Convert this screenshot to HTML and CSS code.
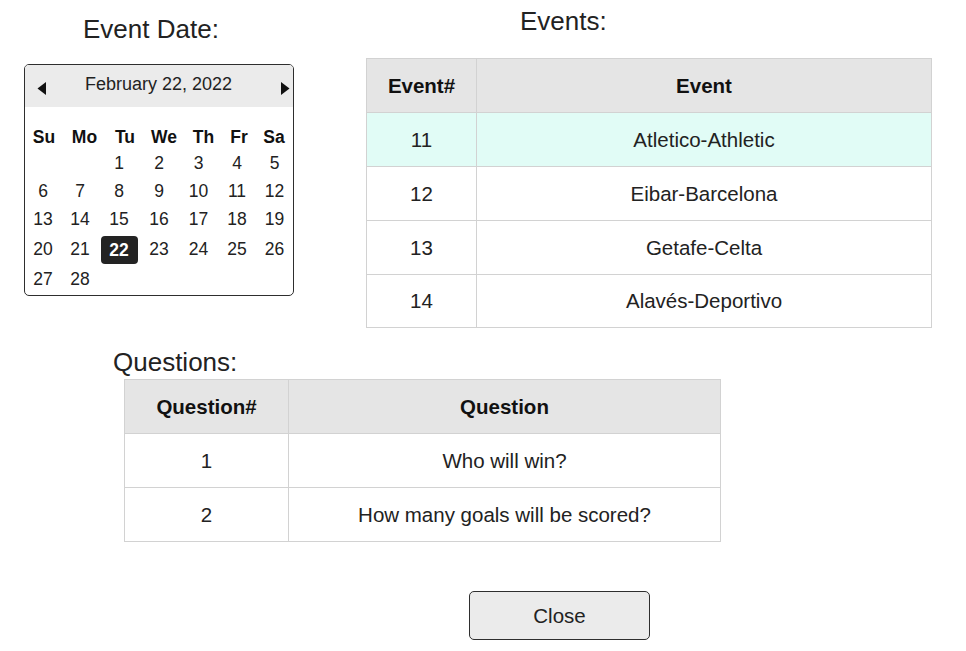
FILE: index.html
```html
<!DOCTYPE html>
<html lang="en">
<head>
<meta charset="utf-8">
<title>Event Questions</title>
<link rel="stylesheet" href="styles.css">
</head>
<body>
<div class="top">
  <section class="date-panel">
    <h2 class="panel-title date-title">Event Date:</h2>
    <div class="calendar">
      <div class="cal-header">
        <button class="nav-btn" aria-label="Previous month">
          <svg width="10" height="13" viewBox="0 0 10 13"><polygon points="9,0 9,13 0.5,6.5" fill="#111"/></svg>
        </button>
        <span class="cal-month">February 22, 2022</span>
        <button class="nav-btn" aria-label="Next month">
          <svg width="10" height="13" viewBox="0 0 10 13"><polygon points="1,0 1,13 9.5,6.5" fill="#111"/></svg>
        </button>
      </div>
      <div class="cal-body">
        <div class="cal-names">
          <span>Su</span><span>Mo</span><span>Tu</span><span>We</span><span>Th</span><span>Fr</span><span>Sa</span>
        </div>
        <div class="cal-days">
          <span></span><span></span><span>1</span><span>2</span><span>3</span><span>4</span><span>5</span>
          <span>6</span><span>7</span><span>8</span><span>9</span><span>10</span><span>11</span><span>12</span>
          <span>13</span><span>14</span><span>15</span><span>16</span><span>17</span><span>18</span><span>19</span>
          <span>20</span><span>21</span><span><b class="selected">22</b></span><span>23</span><span>24</span><span>25</span><span>26</span>
          <span>27</span><span>28</span><span></span><span></span><span></span><span></span><span></span>
        </div>
      </div>
    </div>
  </section>
  <section class="events-panel">
    <h2 class="panel-title events-title">Events:</h2>
    <table class="grid-table events-table">
      <thead>
        <tr><th class="col-num">Event#</th><th>Event</th></tr>
      </thead>
      <tbody>
        <tr class="active"><td>11</td><td>Atletico-Athletic</td></tr>
        <tr><td>12</td><td>Eibar-Barcelona</td></tr>
        <tr><td>13</td><td>Getafe-Celta</td></tr>
        <tr><td>14</td><td>Alavés-Deportivo</td></tr>
      </tbody>
    </table>
  </section>
</div>

<section class="questions-panel">
  <h2 class="panel-title questions-title">Questions:</h2>
  <table class="grid-table questions-table">
    <thead>
      <tr><th class="col-qnum">Question#</th><th>Question</th></tr>
    </thead>
    <tbody>
      <tr><td>1</td><td>Who will win?</td></tr>
      <tr><td>2</td><td>How many goals will be scored?</td></tr>
    </tbody>
  </table>
</section>

<div class="actions">
  <button class="close-btn">Close</button>
</div>
</body>
</html>
```
FILE: styles.css
```css
* {
  box-sizing: border-box;
}

body {
  margin: 0;
  font-family: "Liberation Sans", Arial, sans-serif;
  color: #222;
  background: #fff;
}

.panel-title {
  margin: 0;
  font-size: 26px;
  line-height: 30px;
  font-weight: normal;
  color: #222;
}

.top {
  display: flex;
  align-items: flex-start;
}

/* Date panel */
.date-panel {
  margin-left: 24px;
  width: 270px;
  padding-top: 14px;
}

.date-title {
  padding-left: 59px;
  margin-bottom: 20px;
}

.calendar {
  border: 1px solid #2e2e2e;
  border-radius: 5px;
  overflow: hidden;
  background: #fff;
}

.cal-header {
  height: 42px;
  background: #ebebeb;
  display: flex;
  align-items: center;
  justify-content: space-between;
  padding: 4px 3px 0 12px;
}

.nav-btn {
  border: 0;
  background: transparent;
  padding: 0;
  width: 10px;
  height: 14px;
  display: flex;
  align-items: center;
  justify-content: center;
  flex: none;
}

.nav-btn svg {
  display: block;
  flex: none;
}

.cal-month {
  font-size: 18px;
  color: #222;
  margin-top: -8px;
  padding-right: 10px;
}

.cal-body {
  padding-top: 17px;
}

.cal-names {
  display: grid;
  grid-template-columns: 38px 43px 38px 40px 39px 32px 38px;
  height: 26px;
  font-size: 17.5px;
  font-weight: bold;
  color: #111;
}

.cal-names span,
.cal-days span {
  display: flex;
  align-items: center;
  justify-content: center;
}

.cal-days {
  display: grid;
  grid-template-columns: 36px 38px 40px 40px 39px 38px 37px;
  grid-template-rows: 27px 28px 29px 30px 31px;
  font-size: 17.5px;
  color: #222;
}

.selected {
  display: flex;
  align-items: center;
  justify-content: center;
  width: 37px;
  height: 28px;
  margin-top: 2px;
  background: #232323;
  color: #fff;
  border-radius: 4px;
  font-weight: bold;
}

/* Events panel */
.events-panel {
  margin-left: 72px;
  width: 566px;
  padding-top: 6px;
}

.events-title {
  padding-left: 154px;
  margin-bottom: 22px;
}

.grid-table {
  border-collapse: separate;
  border-spacing: 0;
  border-top: 1px solid #d2d2d2;
  border-left: 1px solid #d2d2d2;
  font-size: 20.5px;
  color: #222;
}

.grid-table th,
.grid-table td {
  border-right: 1px solid #d2d2d2;
  border-bottom: 1px solid #d2d2d2;
  height: 54px;
  padding: 0;
  text-align: center;
  vertical-align: middle;
}

.grid-table th {
  background: #e5e5e5;
  font-weight: bold;
  color: #111;
}

.events-table {
  width: 566px;
}

.events-table .col-num {
  width: 110px;
}

.events-table tbody tr:last-child td {
  height: 53px;
}

.active td {
  background: #e1fcf6;
}

/* Questions */
.questions-panel {
  margin-top: 19px;
}

.questions-title {
  padding-left: 113px;
  margin-bottom: 2px;
}

.questions-table {
  margin-left: 124px;
  width: 597px;
}

.questions-table .col-qnum {
  width: 164px;
}

/* Actions */
.actions {
  margin-top: 49px;
  padding-left: 469px;
}

.close-btn {
  width: 181px;
  height: 49px;
  border: 1px solid #2e2e2e;
  border-radius: 5px;
  background: #ebebeb;
  font-family: "Liberation Sans", Arial, sans-serif;
  font-size: 20.5px;
  color: #222;
  padding: 0;
}
```
